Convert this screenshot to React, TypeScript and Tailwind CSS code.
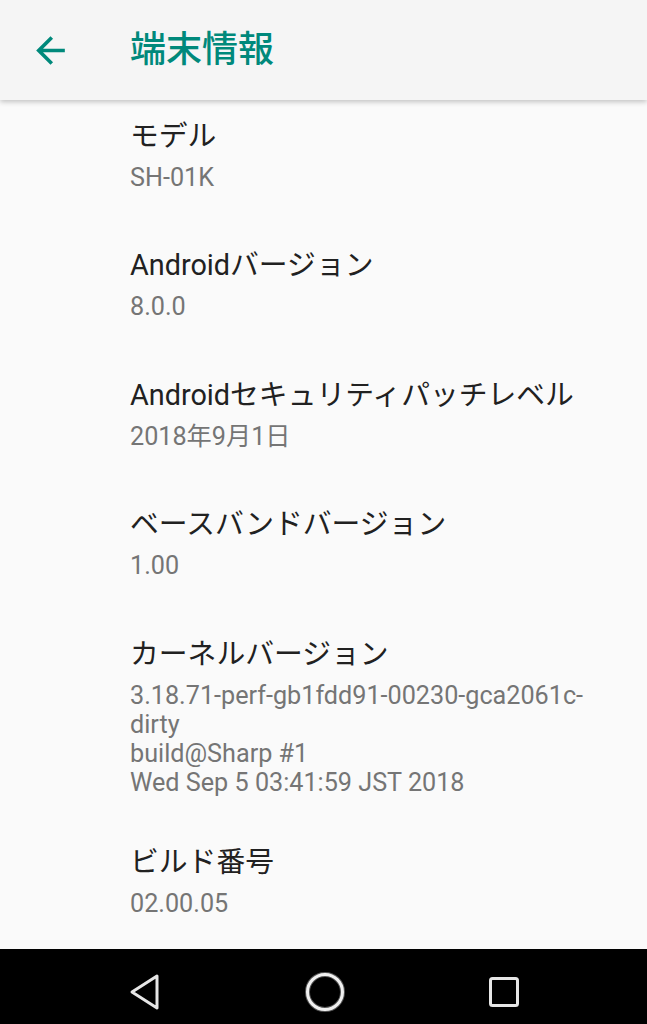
import React from "react";

type Item = { title: string; lines: string[] };

const items: Item[] = [
  { title: "モデル", lines: ["SH-01K"] },
  { title: "Androidバージョン", lines: ["8.0.0"] },
  { title: "Androidセキュリティパッチレベル", lines: ["2018年9月1日"] },
  { title: "ベースバンドバージョン", lines: ["1.00"] },
  {
    title: "カーネルバージョン",
    lines: [
      "3.18.71-perf-gb1fdd91-00230-gca2061c-",
      "dirty",
      "build@Sharp #1",
      "Wed Sep 5 03:41:59 JST 2018",
    ],
  },
  { title: "ビルド番号", lines: ["02.00.05"] },
];

export default function App() {
  return (
    <div className="h-screen w-full flex flex-col bg-[#fafafa] font-['Roboto','Noto_Sans_CJK_JP',sans-serif] overflow-hidden">
      <header className="relative z-10 h-[100px] shrink-0 bg-[#f5f5f5] flex items-center shadow-[0_2px_5px_rgba(0,0,0,0.22)]">
        <div className="w-[130px] shrink-0 flex items-center pl-[29px]">
          <svg width="43" height="43" viewBox="0 0 24 24" fill="#00897b">
            <path d="M20 11H7.83l5.59-5.59L12 4l-8 8 8 8 1.41-1.41L7.83 13H20v-2z" />
          </svg>
        </div>
        <h1 className="text-[36px] leading-none font-medium text-[#00897b]">端末情報</h1>
      </header>

      <main className="flex-1 overflow-hidden">
        {items.map((it, i) => (
          <div
            key={it.title}
            className={
              i === 0
                ? "pl-[130px] pr-[29px] pt-[19px] pb-[19px] min-h-[119px]"
                : "pl-[130px] pr-[29px] pt-[29px] pb-[19px] min-h-[129.5px]"
            }
          >
            <div className="text-[28.8px] leading-[34px] text-[#212121] whitespace-nowrap">{it.title}</div>
            <div className="mt-[10px] text-[25.2px] leading-[29px] text-[#757575]">
              {it.lines.map((l) => (
                <div key={l} className="whitespace-nowrap">{l}</div>
              ))}
            </div>
          </div>
        ))}
      </main>

      <nav className="h-[75px] shrink-0 bg-black flex items-center justify-center gap-[141px] pt-[11px]">
        <svg width="34" height="38" viewBox="0 0 34 38" fill="none">
          <path d="M29 3 L4 19 L29 35 Z" stroke="#e6e6e6" strokeWidth="3" strokeLinejoin="round" />
        </svg>
        <svg width="44" height="44" viewBox="0 0 44 44" fill="none">
          <circle cx="22" cy="22" r="17.5" stroke="#555" strokeWidth="5" />
          <circle cx="22" cy="22" r="17.5" stroke="#f0f0f0" strokeWidth="3" />
        </svg>
        <svg width="32" height="32" viewBox="0 0 32 32" fill="none">
          <rect x="2.5" y="2.5" width="27" height="27" rx="2" stroke="#e6e6e6" strokeWidth="3" />
        </svg>
      </nav>
    </div>
  );
}
